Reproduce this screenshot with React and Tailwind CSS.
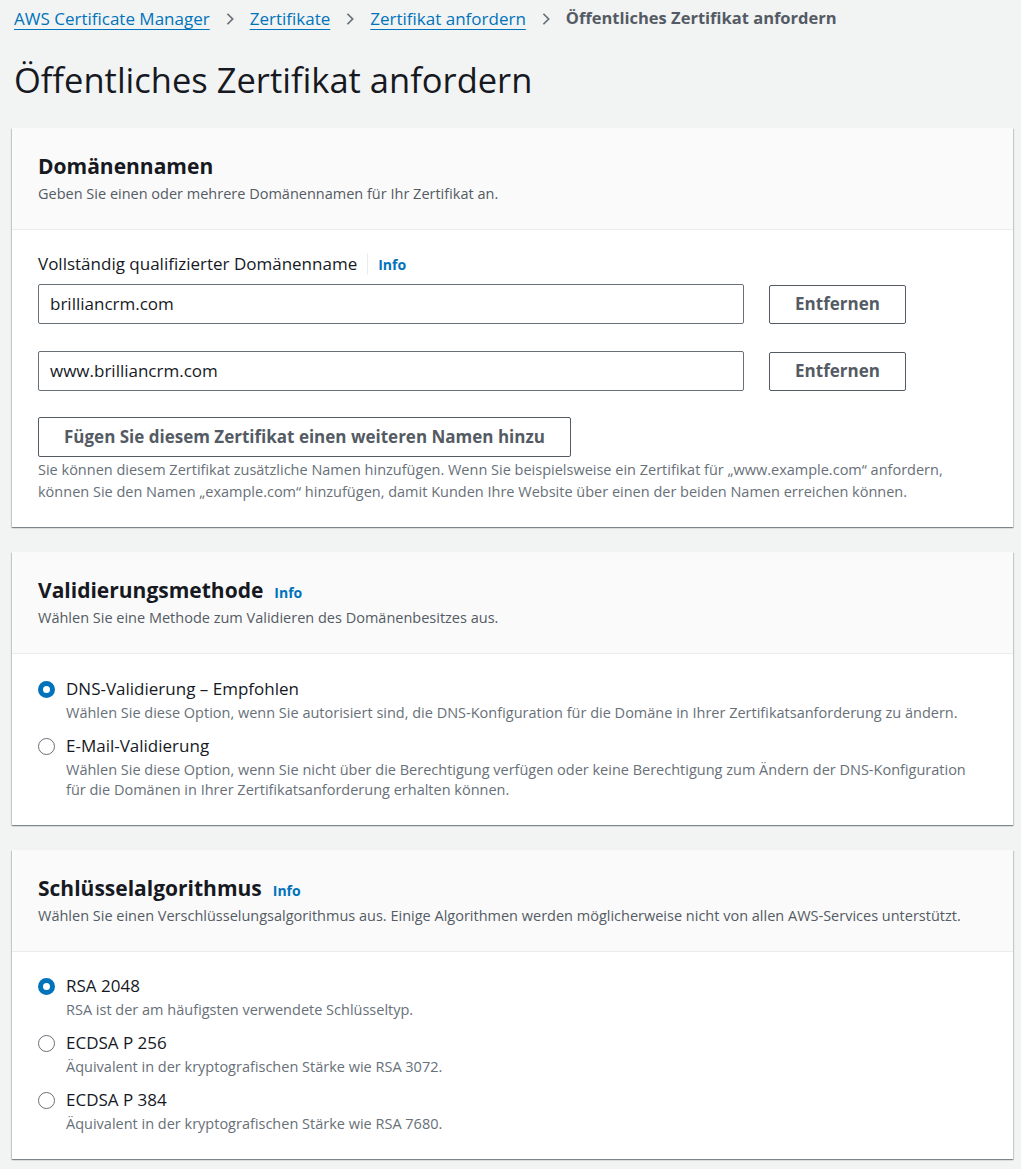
import React from "react";

const F = { fontFamily: '"Open Sans", "Noto Sans", Arial, sans-serif' };

function Chevron() {
  return (
    <svg width="14" height="14" viewBox="0 0 16 16" className="mx-[13px] shrink-0">
      <path d="M5 2l6 6-6 6" fill="none" stroke="#687078" strokeWidth="2" />
    </svg>
  );
}

function Info({ className = "" }) {
  return <span className={"text-[14px] font-bold text-[#0073bb] " + className}>Info</span>;
}

function Card({ title, info, desc, children }) {
  return (
    <div className="bg-white shadow-[0_1px_1px_0_rgba(0,28,36,0.3),1px_1px_1px_0_rgba(0,28,36,0.15),-1px_1px_1px_0_rgba(0,28,36,0.15)]">
      <div className="bg-[#fafafa] border-b border-[#eaeded] px-[26px] pt-[24px] pb-[25px]">
        <div className="flex items-baseline gap-[11px]">
          <h2 className="text-[21px] leading-[28px] font-bold text-[#16191f]">{title}</h2>
          {info && <Info />}
        </div>
        <p className="text-[14.5px] leading-[20px] text-[#545b64] mt-[4px]">{desc}</p>
      </div>
      <div className="px-[26px]">{children}</div>
    </div>
  );
}

function Radio({ checked, label, desc }) {
  return (
    <div className="flex">
      <div className="w-[28px] shrink-0 pt-[6px]">
        {checked ? (
          <div className="w-[17px] h-[17px] rounded-full border-[5px] border-[#0073bb] bg-white" />
        ) : (
          <div className="w-[17px] h-[17px] rounded-full border-[1.5px] border-[#687078] bg-white" />
        )}
      </div>
      <div>
        <div className="text-[17px] leading-[28px] text-[#16191f]">{label}</div>
        <div className="text-[14.5px] leading-[20px] text-[#687078]">{desc}</div>
      </div>
    </div>
  );
}

function DomainRow({ value }) {
  return (
    <div className="flex items-center gap-[25px]">
      <div className="w-[706px] h-[40px] border border-[#687078] rounded-[2px] px-[11px] flex items-center text-[17px] text-[#16191f]">
        {value}
      </div>
      <button className="w-[137px] h-[39px] border border-[#545b64] rounded-[2px] bg-white text-[17px] font-bold text-[#545b64]">
        Entfernen
      </button>
    </div>
  );
}

export default function App() {
  return (
    <div className="min-h-[1169px] bg-[#f2f3f3] pl-[12px] pr-[8px] pb-[8px]" style={F}>
      <nav className="flex items-center pl-[2px] pt-[5px] h-[32px] text-[17px]">
        <a className="text-[#0073bb] underline underline-offset-[4px] decoration-1">AWS Certificate Manager</a>
        <Chevron />
        <a className="text-[#0073bb] underline underline-offset-[4px] decoration-1">Zertifikate</a>
        <Chevron />
        <a className="text-[#0073bb] underline underline-offset-[4px] decoration-1">Zertifikat anfordern</a>
        <Chevron />
        <span className="font-bold text-[#545b64] text-[16.5px]">Öffentliches Zertifikat anfordern</span>
      </nav>
      <h1 className="pl-[2px] mt-[26px] text-[34.5px] leading-[44px] text-[#16191f]">Öffentliches Zertifikat anfordern</h1>
      <div className="mt-[26px] flex flex-col gap-[25px]">
        <Card title="Domänennamen" desc="Geben Sie einen oder mehrere Domänennamen für Ihr Zertifikat an.">
          <div className="pt-[22px] pb-[24px]">
            <div className="flex items-center h-[24px] mb-[8px]">
              <span className="text-[17px] text-[#16191f]">Vollständig qualifizierter Domänenname</span>
              <span className="mx-[10px] w-px h-[22px] bg-[#eaeded]" />
              <Info />
            </div>
            <DomainRow value="brilliancrm.com" />
            <div className="h-[27px]" />
            <DomainRow value="www.brilliancrm.com" />
            <button className="mt-[26px] h-[40px] px-[25px] border border-[#545b64] rounded-[2px] bg-white text-[17px] font-bold text-[#545b64]">
              Fügen Sie diesem Zertifikat einen weiteren Namen hinzu
            </button>
            <p className="mt-[2px] text-[14.5px] leading-[22px] text-[#687078]">
              Sie können diesem Zertifikat zusätzliche Namen hinzufügen. Wenn Sie beispielsweise ein Zertifikat für „www.example.com“ anfordern,
              <br />
              können Sie den Namen „example.com“ hinzufügen, damit Kunden Ihre Website über einen der beiden Namen erreichen können.
            </p>
          </div>
        </Card>
        <Card title="Validierungsmethode" info desc="Wählen Sie eine Methode zum Validieren des Domänenbesitzes aus.">
          <div className="pt-[21px] pb-[25px] flex flex-col gap-[9px]">
            <Radio checked label="DNS-Validierung – Empfohlen" desc="Wählen Sie diese Option, wenn Sie autorisiert sind, die DNS-Konfiguration für die Domäne in Ihrer Zertifikatsanforderung zu ändern." />
            <Radio
              label="E-Mail-Validierung"
              desc={
                <>
                  Wählen Sie diese Option, wenn Sie nicht über die Berechtigung verfügen oder keine Berechtigung zum Ändern der DNS-Konfiguration
                  <br />
                  für die Domänen in Ihrer Zertifikatsanforderung erhalten können.
                </>
              }
            />
          </div>
        </Card>
        <Card title="Schlüsselalgorithmus" info desc="Wählen Sie einen Verschlüsselungsalgorithmus aus. Einige Algorithmen werden möglicherweise nicht von allen AWS-Services unterstützt.">
          <div className="pt-[20px] pb-[25px] flex flex-col gap-[9px]">
            <Radio checked label="RSA 2048" desc="RSA ist der am häufigsten verwendete Schlüsseltyp." />
            <Radio label="ECDSA P 256" desc="Äquivalent in der kryptografischen Stärke wie RSA 3072." />
            <Radio label="ECDSA P 384" desc="Äquivalent in der kryptografischen Stärke wie RSA 7680." />
          </div>
        </Card>
      </div>
    </div>
  );
}
